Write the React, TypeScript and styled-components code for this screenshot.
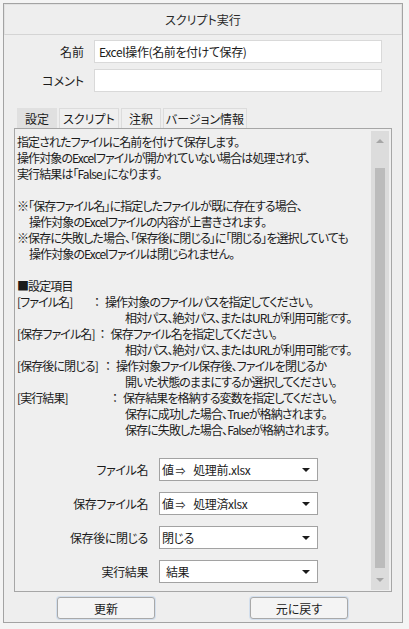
import React from "react";
import styled, { createGlobalStyle } from "styled-components";

const Global = createGlobalStyle`
  html, body { margin: 0; padding: 0; background: #f4f4f4; }
  body {
    font-family: "Noto Sans CJK JP", "Noto Sans", sans-serif;
    font-size: 12px;
    color: #1b1b1b;
    font-feature-settings: "palt";
  }
  * { box-sizing: border-box; }
`;

const Window = styled.div`
  margin: 3px 0 0 3px;
  width: 400px;
  height: 620px;
  border: 1px solid #a3a3a3;
  background: #eeeeee;
  display: flex;
  flex-direction: column;
`;

const TitleBar = styled.div`
  height: 31px;
  flex: none;
  border: 1px solid #e2e2e2;
  border-bottom-color: #d4d4d4;
  display: flex;
  align-items: center;
  justify-content: center;
  color: #2a2a2a;
`;

const Body = styled.div`
  flex: 1;
  display: flex;
  flex-direction: column;
  padding: 5px 10px 3px 10px;
  min-height: 0;
`;

const FieldRow = styled.div<{ $mt?: number }>`
  display: grid;
  grid-template-columns: 70px 1fr;
  column-gap: 10px;
  align-items: center;
  margin-right: 10px;
  margin-top: ${(p) => p.$mt ?? 0}px;
`;

const FieldLabel = styled.label`
  text-align: right;
  white-space: nowrap;
`;

const TextInput = styled.div`
  height: 23px;
  background: #ffffff;
  border: 1px solid #d9d9d9;
  padding: 0 4px;
  display: flex;
  align-items: center;
  white-space: nowrap;
  letter-spacing: -0.4px;
`;

const TabStrip = styled.div`
  display: flex;
  gap: 2px;
  margin: 16px 0 0 3px;
  height: 20px;
`;

const Tab = styled.div<{ $active?: boolean; $w: number }>`
  width: ${(p) => p.$w}px;
  height: 20px;
  display: flex;
  align-items: center;
  justify-content: center;
  white-space: nowrap;
  background: ${(p) => (p.$active ? "#e0e0e0" : "#efefef")};
  border: 1px solid ${(p) => (p.$active ? "#e0e0e0" : "#dcdcdc")};
  border-bottom: none;
`;

const Panel = styled.div`
  flex: 1;
  min-height: 0;
  border: 1px solid #a6a6a6;
  background: #efefef;
  display: flex;
`;

const Content = styled.div`
  flex: 1;
  padding: 5px 0 0 2px;
  overflow: hidden;
  letter-spacing: -0.9px;
`;

const Line = styled.div<{ $indent?: number }>`
  height: 16px;
  line-height: 16px;
  white-space: nowrap;
  padding-left: ${(p) => p.$indent ?? 0}px;
`;

const DefRow = styled.div`
  display: flex;
  height: 16px;
  line-height: 16px;
  white-space: nowrap;
`;

const DefLabel = styled.span<{ $w: number }>`
  min-width: ${(p) => p.$w}px;
`;

const Colon = styled.span`
  width: 16px;
  text-align: center;
  letter-spacing: 0;
  font-feature-settings: normal;
`;

const Scrollbar = styled.div`
  width: 18px;
  margin: 2px 2px 1px 0;
  background: #dcdcdc;
  display: flex;
  flex-direction: column;
  align-items: center;
`;

const ArrowBox = styled.div`
  height: 20px;
  flex: none;
  display: flex;
  align-items: center;
  justify-content: center;
  width: 100%;
`;

const Tri = styled.span<{ $dir: "up" | "down"; $color: string; $w?: number; $h?: number }>`
  width: 0;
  height: 0;
  border-left: ${(p) => (p.$w ?? 7) / 2}px solid transparent;
  border-right: ${(p) => (p.$w ?? 7) / 2}px solid transparent;
  ${(p) =>
    p.$dir === "up"
      ? `border-bottom: ${p.$h ?? 4}px solid ${p.$color};`
      : `border-top: ${p.$h ?? 4}px solid ${p.$color};`}
`;

const Track = styled.div`
  flex: 1;
  width: 100%;
  display: flex;
  justify-content: center;
  padding: 17px 0 2px;
`;

const Thumb = styled.div`
  width: 10px;
  height: 100%;
  background: #bcbcbc;
`;

const SelectGrid = styled.div`
  display: grid;
  grid-template-columns: 131px 159px;
  column-gap: 11px;
  row-gap: 11px;
  margin-top: 20px;
  align-items: center;
  letter-spacing: -0.4px;
`;

const SelectLabel = styled.span`
  text-align: right;
  white-space: nowrap;
`;

const Select = styled.div`
  height: 23px;
  background: #ffffff;
  border: 1px solid #a2a2a2;
  display: flex;
  align-items: center;
`;

const SelectValue = styled.span<{ $pad: number }>`
  flex: 1;
  padding-left: ${(p) => p.$pad}px;
  white-space: nowrap;
`;

const ValArrow = styled.span`
  font-size: 10px;
  margin: 0 8px 0 2px;
  color: #333;
`;

const DropBtn = styled.span`
  width: 22px;
  height: 100%;
  display: flex;
  align-items: center;
  justify-content: center;
`;

const ButtonRow = styled.div`
  display: flex;
  gap: 95px;
  padding-left: 43px;
  margin-top: 5px;
`;

const Button = styled.button`
  width: 98px;
  height: 22px;
  border: 1px solid #a9a9a9;
  border-radius: 3px;
  background: #f4f4f4;
  box-shadow: 0 0 0 1px rgba(150, 190, 235, 0.3);
  font: inherit;
  color: #1b1b1b;
  padding: 0;
`;

type Def = { label?: string; w?: number; text: string };

const intro = [
  "指定されたファイルに名前を付けて保存します。",
  "操作対象のExcelファイルが開かれていない場合は処理されず、",
  "実行結果は「False」になります。",
];

const defs: Def[] = [
  { label: "[ファイル名]", w: 72, text: "操作対象のファイルパスを指定してください。" },
  { text: "相対パス、絶対パス、またはURLが利用可能です。" },
  { label: "[保存ファイル名]", w: 72, text: "保存ファイル名を指定してください。" },
  { text: "相対パス、絶対パス、またはURLが利用可能です。" },
  { label: "[保存後に閉じる]", w: 83, text: "操作対象ファイル保存後、ファイルを閉じるか" },
  { text: "開いた状態のままにするか選択してください。" },
  { label: "[実行結果]", w: 90, text: "保存結果を格納する変数を指定してください。" },
  { text: "保存に成功した場合、Trueが格納されます。" },
  { text: "保存に失敗した場合、Falseが格納されます。" },
];

const selects = [
  { label: "ファイル名", value: "処理前.xlsx", arrow: true, pad: 2 },
  { label: "保存ファイル名", value: "処理済xlsx", arrow: true, pad: 2 },
  { label: "保存後に閉じる", value: "閉じる", arrow: false, pad: 2 },
  { label: "実行結果", value: "結果", arrow: false, pad: 6 },
];

export default function App() {
  return (
    <>
      <Global />
      <Window>
        <TitleBar>スクリプト実行</TitleBar>
        <Body>
          <FieldRow>
            <FieldLabel>名前</FieldLabel>
            <TextInput>Excel操作(名前を付けて保存)</TextInput>
          </FieldRow>
          <FieldRow $mt={6}>
            <FieldLabel>コメント</FieldLabel>
            <TextInput />
          </FieldRow>
          <TabStrip>
            <Tab $active $w={40}>設定</Tab>
            <Tab $w={60}>スクリプト</Tab>
            <Tab $w={40}>注釈</Tab>
            <Tab $w={84}>バージョン情報</Tab>
          </TabStrip>
          <Panel>
            <Content>
              {intro.map((t) => (
                <Line key={t}>{t}</Line>
              ))}
              <Line />
              <Line>※「保存ファイル名」に指定したファイルが既に存在する場合、</Line>
              <Line $indent={12}>操作対象のExcelファイルの内容が上書きされます。</Line>
              <Line>※保存に失敗した場合、「保存後に閉じる」に「閉じる」を選択していても</Line>
              <Line $indent={12}>操作対象のExcelファイルは閉じられません。</Line>
              <Line />
              <Line>■設定項目</Line>
              {defs.map((d, i) =>
                d.label ? (
                  <DefRow key={i}>
                    <DefLabel $w={d.w ?? 0}>{d.label}</DefLabel>
                    <Colon>：</Colon>
                    <span>{d.text}</span>
                  </DefRow>
                ) : (
                  <Line key={i} $indent={108}>
                    {d.text}
                  </Line>
                )
              )}
              <SelectGrid>
                {selects.map((s) => (
                  <React.Fragment key={s.label}>
                    <SelectLabel>{s.label}</SelectLabel>
                    <Select>
                      <SelectValue $pad={s.pad}>
                        {s.arrow ? (
                          <>
                            値<ValArrow>⇒</ValArrow>
                            {s.value}
                          </>
                        ) : (
                          s.value
                        )}
                      </SelectValue>
                      <DropBtn>
                        <Tri $dir="down" $color="#1b1b1b" $w={8} $h={4} />
                      </DropBtn>
                    </Select>
                  </React.Fragment>
                ))}
              </SelectGrid>
            </Content>
            <Scrollbar>
              <ArrowBox>
                <Tri $dir="up" $color="#a6a6a6" $w={8} $h={4} />
              </ArrowBox>
              <Track>
                <Thumb />
              </Track>
              <ArrowBox>
                <Tri $dir="down" $color="#a6a6a6" $w={8} $h={4} />
              </ArrowBox>
            </Scrollbar>
          </Panel>
          <ButtonRow>
            <Button>更新</Button>
            <Button>元に戻す</Button>
          </ButtonRow>
        </Body>
      </Window>
    </>
  );
}
